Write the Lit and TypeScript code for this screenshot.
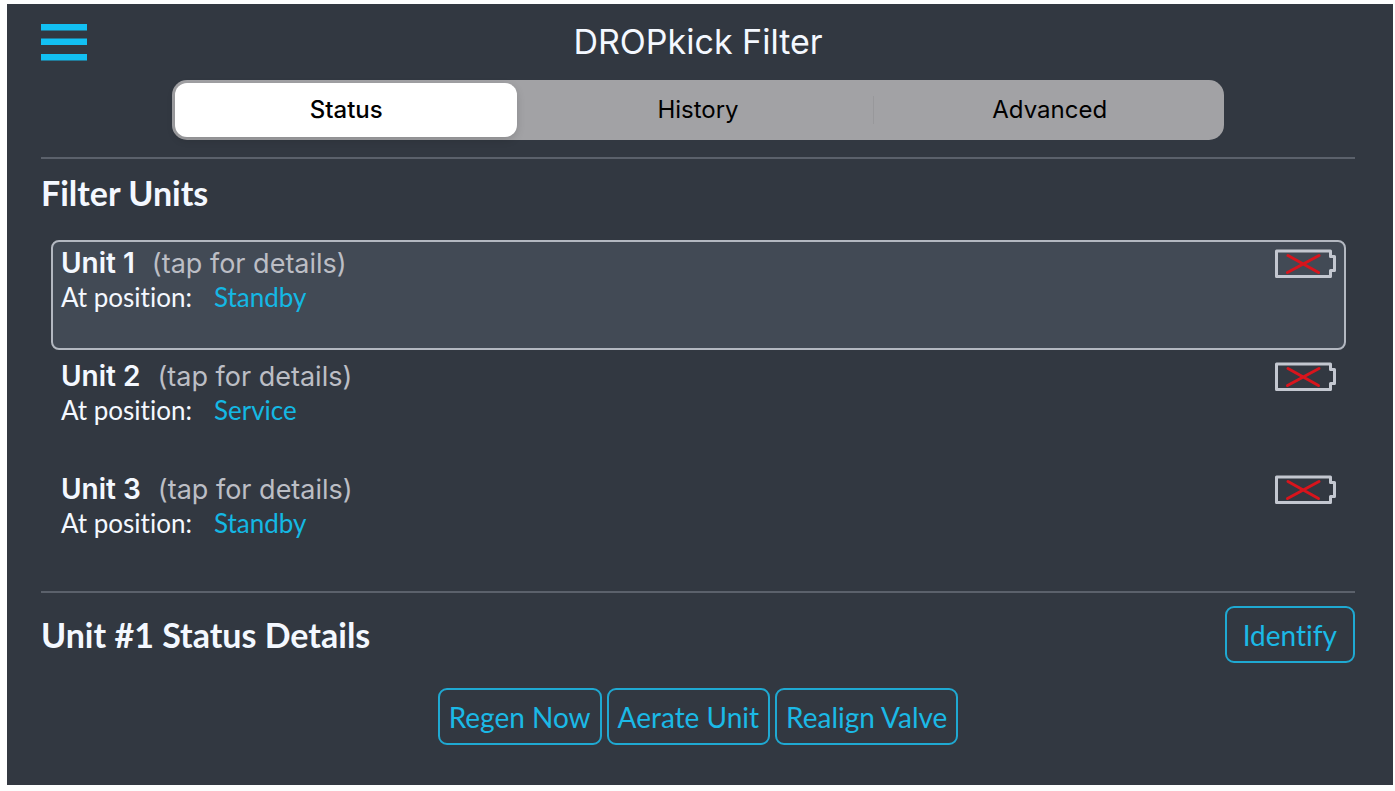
import { LitElement, html, css, svg } from "lit";
import { customElement, property, state } from "lit/decorators.js";
import { classMap } from "lit/directives/class-map.js";

interface Unit {
  id: number;
  position: string;
}

@customElement("battery-icon")
class BatteryIcon extends LitElement {
  static styles = css`
    :host {
      display: block;
    }
    .icon {
      display: block;
      width: 64px;
      height: 32px;
    }
  `;

  render() {
    return html`<svg class="icon" viewBox="0 0 64 32" fill="none" role="img" aria-label="Battery empty">
      ${svg`
        <path d="M2.5 4H56.5V9.5H60.5V23.5H56.5V29.5H2.5Z" stroke="#c3c7d0" stroke-width="3" stroke-linejoin="round"/>
        <path d="M14 8.5L44.5 25.5M45 8.5L13.5 25.5" stroke="#d8141c" stroke-width="3" stroke-linecap="round"/>
      `}
    </svg>`;
  }
}

@customElement("segmented-tabs")
class SegmentedTabs extends LitElement {
  @property({ attribute: false }) items: string[] = [];
  @property({ type: Number }) selected = 0;

  static styles = css`
    :host {
      display: block;
    }
    .track {
      display: grid;
      grid-auto-flow: column;
      grid-auto-columns: 1fr;
      gap: 10px;
      padding: 3px;
      border-radius: 15px;
      background: #a2a2a5;
    }
    .tab {
      position: relative;
      height: 54px;
      padding: 0;
      border: 0;
      border-radius: 12px;
      background: none;
      color: #000;
      font: 400 24px/30px Inter, sans-serif;
      cursor: pointer;
    }
    .tab.on {
      background: #fff;
      font-weight: 500;
      box-shadow: 0 3px 8px rgba(0, 0, 0, 0.14);
    }
    .tab.divided::before {
      content: "";
      position: absolute;
      left: -6px;
      top: 13px;
      bottom: 13px;
      width: 1px;
      background: #98989b;
    }
  `;

  private choose(index: number) {
    this.dispatchEvent(new CustomEvent("tab-change", { detail: index }));
  }

  render() {
    return html`<div class="track" role="tablist">
      ${this.items.map((label, i) => {
        const on = i === this.selected;
        const divided = i > 0 && !on && i - 1 !== this.selected;
        return html`<button
          class=${classMap({ tab: true, on, divided })}
          role="tab"
          aria-selected=${on ? "true" : "false"}
          @click=${() => this.choose(i)}
        >${label}</button>`;
      })}
    </div>`;
  }
}

@customElement("app-root")
class AppRoot extends LitElement {
  @state() private tab = 0;
  @state() private selectedUnit = 1;

  private units: Unit[] = [
    { id: 1, position: "Standby" },
    { id: 2, position: "Service" },
    { id: 3, position: "Standby" },
  ];

  static styles = css`
    :host {
      display: flex;
      box-sizing: border-box;
      min-height: 100vh;
      padding: 4px 2px 6px 7px;
      background: #fdfefe;
      font-family: Lato, sans-serif;
      font-variant-ligatures: none;
    }
    .screen {
      flex: 1;
      min-width: 0;
      padding: 0 38px 24px 34px;
      background: #323841;
      color: #f4f8ff;
    }
    .header {
      display: grid;
      grid-template-columns: 46px 1fr 46px;
      align-items: center;
      height: 76px;
    }
    .menu {
      padding: 0;
      border: 0;
      background: none;
      cursor: pointer;
    }
    .bars {
      display: block;
      width: 46px;
      height: 38px;
    }
    .title {
      margin: 0;
      text-align: center;
      font-family: Inter, sans-serif;
      font-size: 34px;
      line-height: 40px;
      font-weight: 400;
    }
    .tabs {
      width: 80%;
      margin: 0 auto 17px;
    }
    .rule {
      height: 2px;
      margin: 0;
      border: 0;
      background: #5b616b;
    }
    .heading {
      margin: 0;
      font-size: 34px;
      line-height: 40px;
      font-weight: 700;
    }
    .units-heading {
      padding: 14px 0 27px;
    }
    .units {
      display: grid;
      gap: 3px;
      margin: 0 9px 15px 10px;
      padding: 0;
      list-style: none;
    }
    .unit {
      box-sizing: border-box;
      display: flex;
      align-items: flex-start;
      justify-content: space-between;
      width: 100%;
      height: 110px;
      padding: 5px 6px 5px 8px;
      border: 2px solid transparent;
      border-radius: 8px;
      background: none;
      color: inherit;
      font-family: inherit;
      font-variant-ligatures: inherit;
      text-align: left;
      cursor: pointer;
    }
    .unit.on {
      border-color: #b3b8c1;
      background: #424a55;
    }
    .line {
      display: flex;
      align-items: baseline;
    }
    .name-line {
      gap: 17px;
      font-family: Inter, sans-serif;
      line-height: 32px;
    }
    .name {
      font-size: 28px;
      font-weight: 600;
    }
    .hint {
      font-size: 27px;
      color: #bcbec5;
    }
    .position-line {
      gap: 22px;
      font-size: 26px;
      line-height: 34px;
    }
    .position {
      color: #14b8e4;
    }
    .details {
      display: flex;
      align-items: center;
      justify-content: space-between;
      padding: 13px 0 25px;
    }
    .actions {
      display: flex;
      flex-wrap: wrap;
      justify-content: center;
      gap: 5px;
    }
    .action {
      height: 57px;
      padding: 0 9px;
      border: 2px solid #1fa9d2;
      border-radius: 9px;
      background: none;
      color: #1bb9e6;
      font-family: inherit;
      font-size: 28px;
      line-height: 34px;
      font-variant-ligatures: inherit;
      cursor: pointer;
    }
    .identify {
      padding: 0 16px;
    }
  `;

  render() {
    return html`<main class="screen">
      <header class="header">
        <button class="menu" aria-label="Menu">
          <svg class="bars" viewBox="0 0 46 38" fill="#12c0f3" aria-hidden="true">
            <rect y="1" width="46" height="6.5" />
            <rect y="15.5" width="46" height="6.5" />
            <rect y="31" width="46" height="6.5" />
          </svg>
        </button>
        <h1 class="title">DROPkick Filter</h1>
      </header>
      <segmented-tabs
        class="tabs"
        .items=${["Status", "History", "Advanced"]}
        .selected=${this.tab}
        @tab-change=${(e: CustomEvent<number>) => (this.tab = e.detail)}
      ></segmented-tabs>
      <hr class="rule" />
      <h2 class="heading units-heading">Filter Units</h2>
      <ul class="units">
        ${this.units.map(
          (u) => html`<li>
            <button
              class=${classMap({ unit: true, on: u.id === this.selectedUnit })}
              @click=${() => (this.selectedUnit = u.id)}
            >
              <span>
                <span class="line name-line">
                  <span class="name">Unit ${u.id}</span>
                  <span class="hint">(tap for details)</span>
                </span>
                <span class="line position-line">
                  <span>At position:</span>
                  <span class="position">${u.position}</span>
                </span>
              </span>
              <battery-icon></battery-icon>
            </button>
          </li>`
        )}
      </ul>
      <hr class="rule" />
      <section class="details">
        <h2 class="heading">Unit #${this.selectedUnit} Status Details</h2>
        <button class="action identify">Identify</button>
      </section>
      <div class="actions">
        <button class="action">Regen Now</button>
        <button class="action">Aerate Unit</button>
        <button class="action">Realign Valve</button>
      </div>
    </main>`;
  }
}
